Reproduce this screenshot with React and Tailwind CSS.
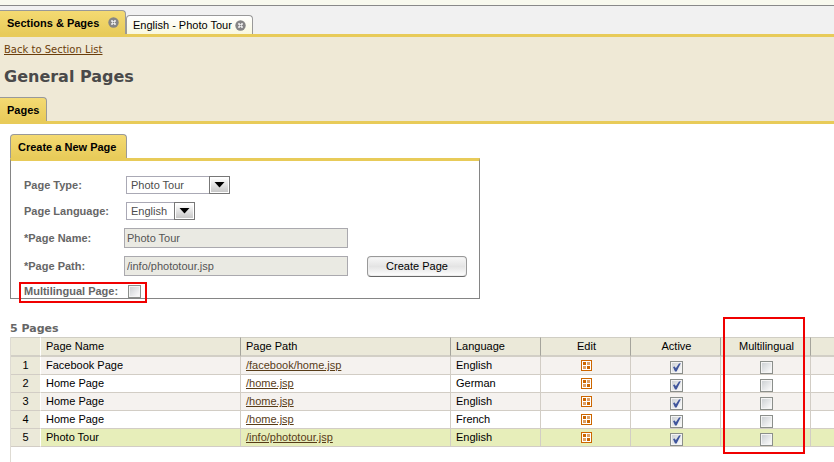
import React from 'react';

const PAGES = [
  { name: 'Facebook Page', path: '/facebook/home.jsp', language: 'English' },
  { name: 'Home Page', path: '/home.jsp', language: 'German' },
  { name: 'Home Page', path: '/home.jsp', language: 'English' },
  { name: 'Home Page', path: '/home.jsp', language: 'French' },
  { name: 'Photo Tour', path: '/info/phototour.jsp', language: 'English', selected: true },
];

const HEAD = 'h-5 border-t border-t-[#d0cec4] border-b-2 border-b-[#d2cfc6] border-r border-r-[#a5a49c] p-0 align-top font-normal leading-4';
const CELL = 'h-[18px] border-b border-b-[#d2cdc5] border-r border-r-[#d2cdc5] p-0 align-top leading-4';

function CloseIcon() {
  return (
    <svg className="size-[11px]" viewBox="0 0 11 11" aria-hidden="true">
      <circle cx="5.5" cy="5.5" r="5.2" fill="#858585" />
      <path d="M3.4 3.4 L7.6 7.6 M7.6 3.4 L3.4 7.6" stroke="#f4f4f4" strokeWidth="1.7" />
      <rect x="4.8" y="4.8" width="1.4" height="1.4" fill="#858585" />
    </svg>
  );
}

function EditIcon() {
  return (
    <svg className="size-[11px]" viewBox="0 0 11 11" aria-hidden="true">
      <rect x="0.5" y="0.5" width="10" height="10" fill="#fff" stroke="#cc6600" />
      <rect x="2" y="2" width="3" height="3" fill="#cc6600" />
      <rect x="6" y="2" width="3" height="3" fill="#dda066" />
      <rect x="2" y="6" width="3" height="3" fill="#dda066" />
      <rect x="6" y="6" width="3" height="3" fill="#cc6600" />
    </svg>
  );
}

function Check({ id, label, defaultChecked = false }) {
  return (
    <span className="relative block size-[13px]">
      <input
        id={id}
        type="checkbox"
        aria-label={label}
        defaultChecked={defaultChecked}
        className="peer block size-[13px] appearance-none border border-[#8b8f8b] bg-linear-to-br from-[#c9cdd0] to-white shadow-[inset_0_0_0_1px_#f4f4f4]"
      />
      <svg className="pointer-events-none absolute inset-0 hidden size-[13px] peer-checked:block" viewBox="0 0 13 13" aria-hidden="true">
        <path d="M3 6 L4.8 5.4 L5.8 7.2 L9 2.4 L10.8 2.2 L6.6 10.6 L5 10.6 Z" fill="#3f559c" />
      </svg>
    </span>
  );
}

function Select({ id, width, value }) {
  return (
    <div className={`relative h-[18px] ${width}`}>
      <select
        id={id}
        defaultValue={value}
        className="block h-[18px] w-full appearance-none border border-[#aaa9b5] bg-white pl-1 text-[11px] leading-4 text-[#4c4c4c]"
      >
        <option>{value}</option>
      </select>
      <svg className="pointer-events-none absolute top-0 right-0 h-[18px] w-[21px]" viewBox="0 0 21 18" aria-hidden="true">
        <defs>
          <linearGradient id={`${id}-face`} x1="0" y1="0" x2="0" y2="1">
            <stop offset="0" stopColor="#fff" />
            <stop offset="1" stopColor="#c8c8c8" />
          </linearGradient>
        </defs>
        <rect x="0.5" y="0.5" width="20" height="17" fill="#fff" stroke="#777" />
        <rect x="2" y="2" width="17" height="14" fill={`url(#${id}-face)`} />
        <path d="M5.5 6 H15.5 L10.5 11.5 Z" fill="#000" />
      </svg>
    </div>
  );
}

function Field({ id, label, children, height }) {
  return (
    <div className={`flex shrink-0 items-center ${height}`}>
      <label htmlFor={id} className="w-[102px] shrink-0 font-bold text-[#666]">{label}</label>
      {children}
    </div>
  );
}

const INPUT = 'h-5 w-56 -ml-0.5 border border-[#aaa9ae] bg-[#eaeae3] px-0.5 text-[11px] leading-4 text-[#555]';
const TAB = 'rounded-tr border-t border-r border-[#999] bg-linear-to-b from-[#f4da72] to-[#e8cb59] text-[11px] font-bold text-black';

export default function App() {
  return (
    <div className="flex min-h-screen flex-col overflow-hidden bg-white font-['Liberation_Sans',Arial,sans-serif] text-[11px] leading-4 text-black">
      <div className="h-[5px] bg-[#f8f9ee]" />
      <nav className="flex h-8 items-end border-t border-b-3 border-t-[#898989] border-b-[#e8cb59] bg-[#f1f1f1]">
        <div className={`flex h-6 w-[126px] items-center justify-between pr-1.5 pl-[7px] ${TAB}`}>
          <a href="#sections" className="whitespace-nowrap">Sections &amp; Pages</a>
          <button type="button" aria-label="Close Sections & Pages"><CloseIcon /></button>
        </div>
        <div className="flex h-[19px] w-[127px] items-center justify-between rounded-t border border-b-0 border-[#999] bg-linear-to-b from-white to-[#f9f8df] pr-1.5 pl-1.5">
          <a href="#tour" className="whitespace-nowrap">English - Photo Tour</a>
          <button type="button" aria-label="Close English - Photo Tour"><CloseIcon /></button>
        </div>
      </nav>

      <header className="flex h-[87px] flex-col border-b-3 border-[#e8cb59] bg-[#efe9d6] font-['DejaVu_Sans',Verdana,sans-serif]">
        <a href="#back" className="mt-[5px] ml-1 self-start text-[10px] leading-4 text-[#6b3e0b] underline">Back to Section List</a>
        <h1 className="mt-[7px] ml-1 text-[16px] leading-6 font-bold text-[#4a4a4a]">General Pages</h1>
        <div className={`mt-auto flex h-6 w-[47px] items-center pl-[7px] font-['Liberation_Sans',Arial,sans-serif] ${TAB}`}>Pages</div>
      </header>

      <main className="flex flex-1 flex-col pt-2.5 pl-2.5">
        <form className="w-[470px]" onSubmit={(e) => e.preventDefault()}>
          <h2 className={`flex h-6 w-[117px] items-center rounded-tl border-l pl-[7px] whitespace-nowrap ${TAB}`}>Create a New Page</h2>
          <div className="flex h-[141px] flex-col border border-t-3 border-[#858585] border-t-[#e8cb59] pt-[11px] pl-[13px]">
            <Field id="type" label="Page Type:" height="h-[26px]">
              <Select id="type" width="w-[104px]" value="Photo Tour" />
            </Field>
            <Field id="lang" label="Page Language:" height="h-[26px]">
              <Select id="lang" width="w-[69px]" value="English" />
            </Field>
            <Field id="name" label="*Page Name:" height="h-7">
              <input id="name" className={INPUT} defaultValue="Photo Tour" />
            </Field>
            <Field id="path" label="*Page Path:" height="h-7">
              <input id="path" className={INPUT} defaultValue="/info/phototour.jsp" />
              <button
                type="submit"
                className="ml-[19px] h-[21px] w-[100px] rounded border border-[#999] border-b-[#666] bg-linear-to-b from-[#f8f8f8] via-[#e4e4e4] to-white text-[11px] shadow-[inset_0_0_0_1px_#eee]"
              >
                Create Page
              </button>
            </Field>
            <div className="mt-0.5 -ml-[5px] flex h-[21px] w-32 shrink-0 items-start justify-between border-2 border-[#f00000] pt-px pr-1 pl-[3px]">
              <label htmlFor="multi" className="leading-[13px] font-bold whitespace-nowrap text-[#666]">Multilingual Page:</label>
              <Check id="multi" />
            </div>
          </div>
        </form>

        <h2 className="mt-[21px] font-['DejaVu_Sans',Verdana,sans-serif] text-[11px] leading-[17px] font-bold text-[#666]">5 Pages</h2>

        <section className="relative flex-1 border-l border-[#dedbd3]">
          <table className="w-full table-fixed border-separate border-spacing-0">
            <colgroup>
              <col className="w-[30px]" />
              <col className="w-[200px]" />
              <col className="w-[210px]" />
              <col className="w-[90px]" />
              <col className="w-[90px]" />
              <col className="w-[90px]" />
              <col className="w-[90px]" />
              <col />
            </colgroup>
            <thead className="bg-[#ebe9d9]">
              <tr>
                <th className={`${HEAD} border-r-white`} />
                <th className={`${HEAD} pl-[5px] text-left`}>Page Name</th>
                <th className={`${HEAD} pl-[5px] text-left`}>Page Path</th>
                <th className={`${HEAD} pl-[5px] text-left`}>Language</th>
                <th className={`${HEAD} pl-0.5`}>Edit</th>
                <th className={`${HEAD} pl-0.5`}>Active</th>
                <th className={`${HEAD} pl-0.5`}>Multilingual</th>
                <th className={`${HEAD} border-r-0`} />
              </tr>
            </thead>
            <tbody>
              {PAGES.map((page, i) => (
                <tr key={i} className={page.selected ? 'bg-[#e7eeba]' : i % 2 ? 'bg-white' : 'bg-[#f5f2ef]'}>
                  <td className={`${CELL} border-r-white bg-[#ebe9d9] text-center`}>{i + 1}</td>
                  <td className={`${CELL} pl-[5px]`}>{page.name}</td>
                  <td className={`${CELL} pl-[5px]`}>
                    <a href={`#${page.path}`} className="text-[#583c18] underline">{page.path}</a>
                  </td>
                  <td className={`${CELL} pl-[5px]`}>{page.language}</td>
                  <td className={`${CELL} pl-0.5`}>
                    <div className="flex justify-center pt-[3px]">
                      <button type="button" aria-label={`Edit ${page.name}`}><EditIcon /></button>
                    </div>
                  </td>
                  <td className={`${CELL} pl-0.5`}>
                    <div className="flex justify-center pt-1"><Check label="Active" defaultChecked /></div>
                  </td>
                  <td className={`${CELL} pl-0.5`}>
                    <div className="flex justify-center pt-1"><Check label="Multilingual" /></div>
                  </td>
                  <td className={`${CELL} border-r-0`} />
                </tr>
              ))}
            </tbody>
          </table>
          <div className="pointer-events-none absolute -top-5 left-[712px] h-[137px] w-[82px] border-2 border-[#f00000]" />
        </section>
      </main>
    </div>
  );
}
